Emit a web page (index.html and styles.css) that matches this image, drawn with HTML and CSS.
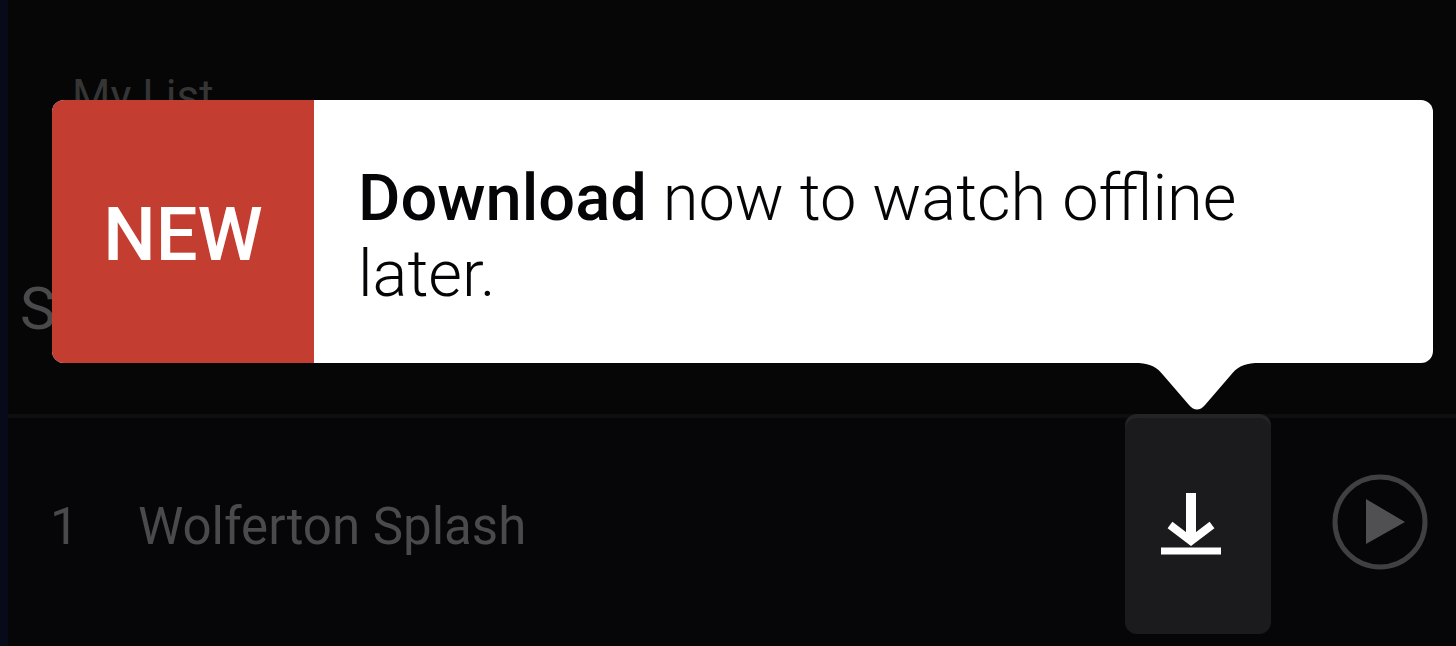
FILE: index.html
```html
<!DOCTYPE html>
<html lang="en">
  <head>
    <meta charset="UTF-8" />
    <meta name="viewport" content="width=device-width, initial-scale=1.0" />
    <title>Wolferton Splash</title>
    <link rel="stylesheet" href="styles.css">
  </head>
  <body>
    <main class="page">
      <header class="show-header">
        <a class="my-list" href="#">My List</a>
        <h1 class="season">S</h1>
      </header>

      <ol class="episodes">
        <li class="episode">
          <span class="episode-number">1</span>
          <span class="episode-title">Wolferton Splash</span>
          <button type="button" class="download" aria-label="Download">
            <svg width="62" height="62" viewBox="0 0 62 62" fill="none" stroke="#fff">
              <path d="M31 0v44" stroke-width="10" />
              <path d="M10 32l21 16 21-16" stroke-width="8" />
              <path d="M1 58h60" stroke-width="7" />
            </svg>
          </button>
          <button type="button" class="play" aria-label="Play">
            <svg width="96" height="96" viewBox="0 0 96 96">
              <circle cx="48" cy="48" r="45" fill="none" stroke="#403f41" stroke-width="5" />
              <path d="M34 25v45l39-22z" fill="#504f51" />
            </svg>
          </button>
        </li>
      </ol>

      <div class="tooltip" role="status">
        <strong class="tooltip-badge">NEW</strong>
        <p class="tooltip-text"><b>Download</b> now to watch offline later.</p>
        <svg class="tooltip-tail" width="116" height="48" viewBox="0 0 116 48">
          <path d="M0 0C12 1 18 4 25 13L50 42Q58 51 66 42L91 13C98 4 104 1 116 0z" fill="#fff" />
        </svg>
      </div>
    </main>
  </body>
</html>
```

FILE: styles.css
```css
/* styles.css */
* {
  box-sizing: border-box;
}

body {
  margin: 0;
  background: #060606;
  color: #4a494b;
  font-family: Roboto, Arial, sans-serif;
}

.page {
  position: relative;
  min-height: 100vh;
  border-left: 8px solid #070a18;
}

.show-header {
  display: flex;
  flex-direction: column;
  align-items: flex-start;
  gap: 152px;
  padding: 70px 12px 70px;
}

.my-list {
  margin-left: 52px;
  color: #353535;
  font-size: 44px;
  line-height: 52px;
  text-decoration: none;
}

.season {
  margin: 0;
  font-size: 60px;
  font-weight: 400;
  line-height: 70px;
}

.episodes {
  margin: 0;
  padding: 0;
  list-style: none;
}

.episode {
  display: flex;
  align-items: center;
  padding: 0 28px 12px 42px;
  background: #060507;
  box-shadow: inset 0 4px #0e0e10;
}

.episode-number,
.episode-title {
  padding-top: 4px;
  font-size: 51px;
}

.episode-number {
  width: 88px;
}

.episode-title {
  flex: 1;
}

button {
  display: flex;
  align-items: center;
  justify-content: center;
  padding: 0;
  border: none;
  background: none;
  cursor: pointer;
}

.download {
  width: 146px;
  height: 220px;
  margin-right: 61px;
  padding-right: 14px;
  border-radius: 12px;
  background: #1b1a1c;
  box-shadow: inset 0 4px #242326;
}

.play {
  padding-bottom: 4px;
}

/* callout above the download button */
.tooltip {
  position: absolute;
  top: 100px;
  left: 44px;
  right: 23px;
  display: flex;
  border-radius: 12px;
  background: #fff;
  color: #050507;
}

.tooltip-badge {
  display: flex;
  align-items: center;
  justify-content: center;
  width: 262px;
  padding-top: 6px;
  border-radius: 12px 0 0 12px;
  background: #c43d31;
  color: #fff;
  font-size: 74px;
  font-weight: 500;
}

.tooltip-text {
  flex: 1;
  margin: 0;
  padding: 60px 44px 51px;
  font-size: 65px;
  font-weight: 300;
  line-height: 76px;
}

.tooltip-text b {
  font-weight: 500;
}

.tooltip-tail {
  position: absolute;
  top: 100%;
  right: 178px;
}
```
